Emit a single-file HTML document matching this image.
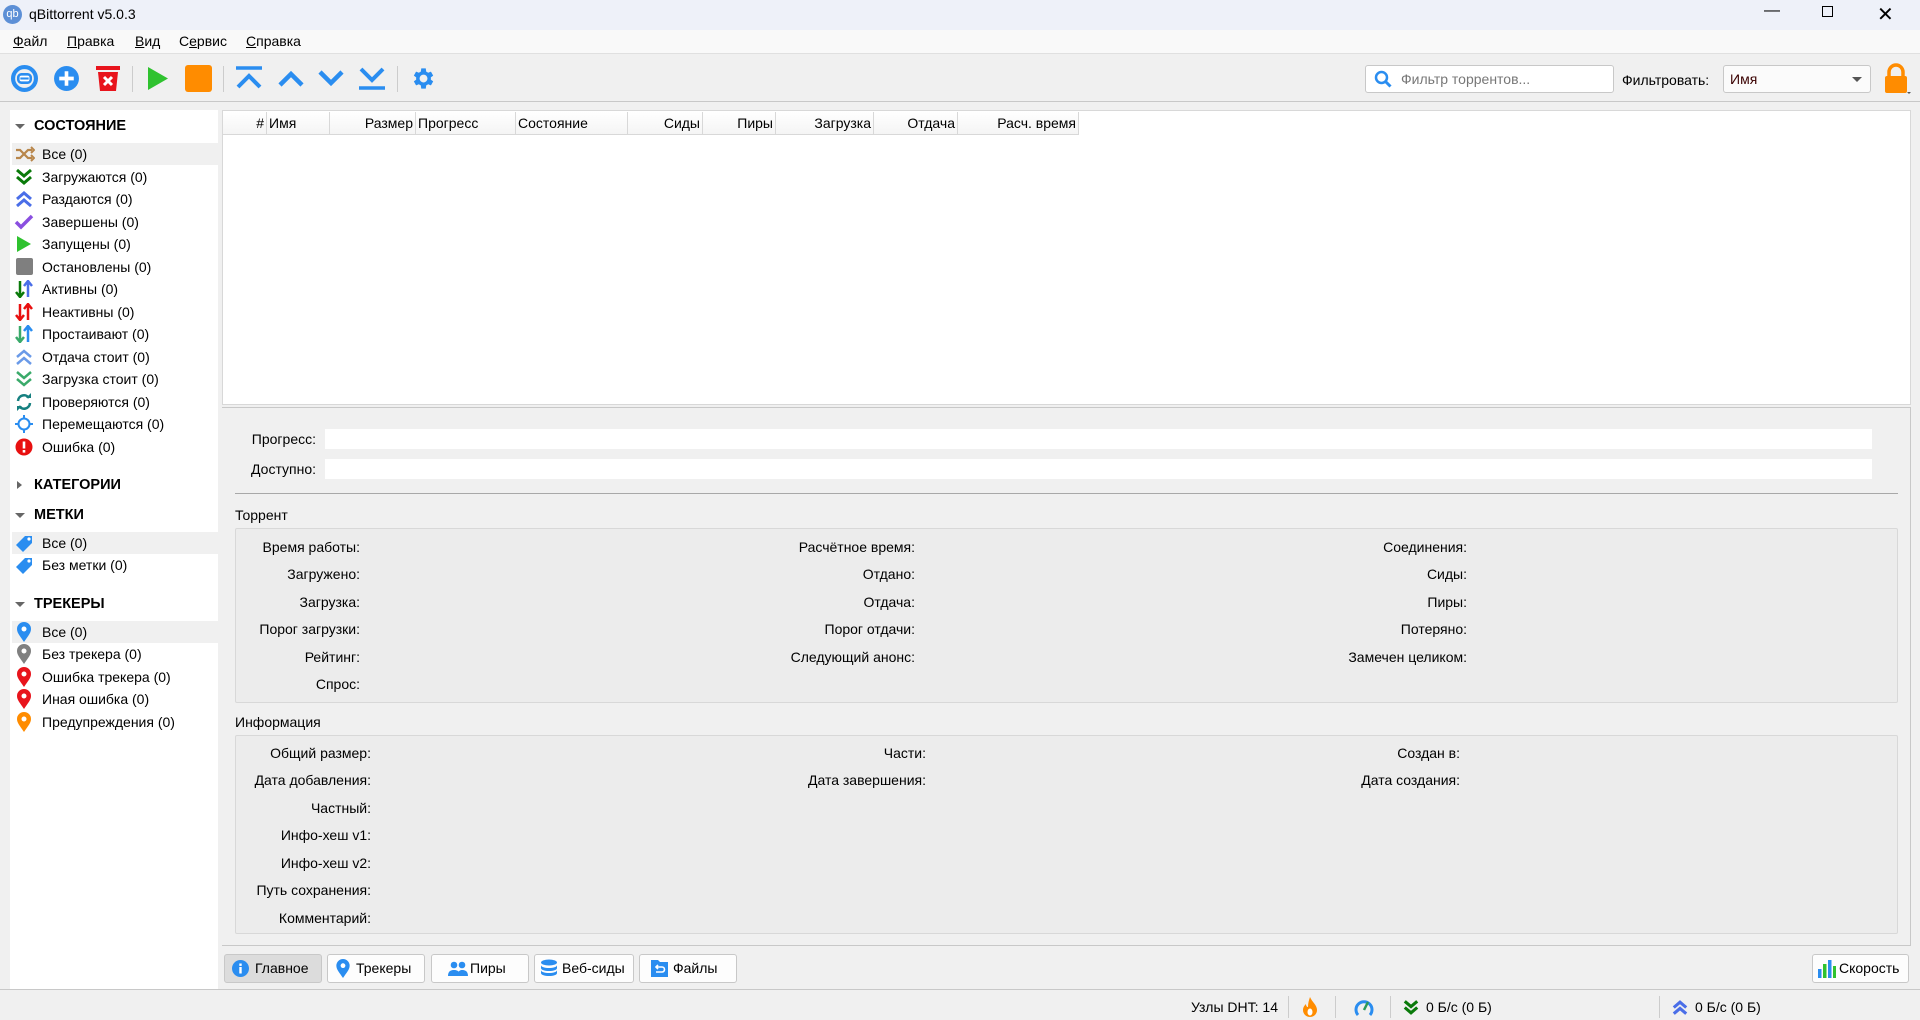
<!DOCTYPE html>
<html><head><meta charset="utf-8"><style>
*{margin:0;padding:0;box-sizing:border-box}
body{width:1920px;height:1020px;background:#f0f0f0;font-family:"Liberation Sans","DejaVu Sans",sans-serif;font-size:14px;color:#000;position:relative;overflow:hidden}
.a{position:absolute;white-space:nowrap}
.r{position:absolute;white-space:nowrap;text-align:right}
svg{position:absolute}
.side div.it{position:absolute;left:12px;width:206px;height:22px;line-height:22px;padding-left:30px;font-size:14px}
.side div.hl{background:#f0f0f0}
.hd{position:absolute;font-weight:bold;font-size:14.5px;left:34px}
.tri{position:absolute;left:15px;width:0;height:0}
.col{position:absolute;top:112px;height:23px;line-height:23px;border-right:1px solid #d8d8d8;font-size:14px;padding:0 2px;background:linear-gradient(#fff,#f4f4f4)}
.btn{position:absolute;top:954px;height:29px;border:1px solid #c8c8c8;border-radius:3px;background:#fdfdfd;font-size:14px;line-height:27px}
</style></head><body>
<!-- title bar -->
<div class="a" style="left:0;top:0;width:1920px;height:30px;background:#eef1f9"></div>
<div class="a" style="left:3px;top:5px;width:19px;height:19px;border-radius:50%;background:#5c8fd6;color:#fff;font-size:11px;line-height:19px;text-align:center">qb</div>
<div class="a" style="left:29px;top:6px;font-size:14px">qBittorrent v5.0.3</div>
<div class="a" style="left:1764px;top:2px;font-size:16px">&#8212;</div>
<div class="a" style="left:1822px;top:6px;width:11px;height:11px;border:1px solid #000"></div>
<div class="a" style="left:1877px;top:2px;font-size:20px">&#x2715;</div>
<!-- menu -->
<div class="a" style="left:0;top:30px;width:1920px;height:24px;background:#f9f9f9;border-bottom:1px solid #e0e0e0"></div>
<div class="a" style="left:13px;top:33px"><u>Ф</u>айл</div>
<div class="a" style="left:67px;top:33px"><u>П</u>равка</div>
<div class="a" style="left:135px;top:33px"><u>В</u>ид</div>
<div class="a" style="left:179px;top:33px">С<u>е</u>рвис</div>
<div class="a" style="left:246px;top:33px"><u>С</u>правка</div>
<div class="a" style="left:0;top:101px;width:1920px;height:1px;background:#c8c8c8"></div>
<!-- toolbar icons -->
<svg style="left:11px;top:65px" width="27" height="27" viewBox="0 0 26 26"><circle cx="13" cy="13" r="11" fill="none" stroke="#2a8df0" stroke-width="4"/><rect x="7" y="9" width="12" height="8" rx="3" fill="#fff" stroke="#2a8df0" stroke-width="2.5"/><rect x="9" y="12" width="8" height="2" fill="#2a8df0"/></svg>
<svg style="left:53px;top:65px" width="27" height="27" viewBox="0 0 26 26"><circle cx="13" cy="13" r="12" fill="#2a8df0"/><path d="M13 6v14M6 13h14" stroke="#fff" stroke-width="3.5"/></svg>
<svg style="left:95px;top:65px" width="26" height="27" viewBox="0 0 26 27"><rect x="1" y="1" width="24" height="4" fill="#e8141c"/><path d="M3 7h20l-2 19H5z" fill="#e8141c"/><path d="M9 12l8 8M17 12l-8 8" stroke="#fff" stroke-width="3"/></svg>
<div class="a" style="left:132px;top:66px;width:1px;height:26px;background:#ccc"></div>
<svg style="left:145px;top:65px" width="26" height="27" viewBox="0 0 26 27"><path d="M3 2l20 11.5L3 25z" fill="#2fc22f"/></svg>
<svg style="left:185px;top:65px" width="27" height="27"><rect x="0" y="0" width="27" height="27" rx="3" fill="#ff8c00"/></svg>
<div class="a" style="left:223px;top:66px;width:1px;height:26px;background:#ccc"></div>
<svg style="left:235px;top:66px" width="28" height="24" viewBox="0 0 28 24"><path d="M1 2h26" stroke="#2a8df0" stroke-width="3.5"/><path d="M3 21l11-11 11 11" fill="none" stroke="#2a8df0" stroke-width="4"/></svg>
<svg style="left:277px;top:66px" width="28" height="24" viewBox="0 0 28 24"><path d="M3 19l11-11 11 11" fill="none" stroke="#2a8df0" stroke-width="4.5"/></svg>
<svg style="left:317px;top:66px" width="28" height="24" viewBox="0 0 28 24"><path d="M3 6l11 11 11-11" fill="none" stroke="#2a8df0" stroke-width="4.5"/></svg>
<svg style="left:358px;top:66px" width="28" height="24" viewBox="0 0 28 24"><path d="M3 3l11 11 11-11" fill="none" stroke="#2a8df0" stroke-width="4"/><path d="M1 22h26" stroke="#2a8df0" stroke-width="3.5"/></svg>
<div class="a" style="left:397px;top:66px;width:1px;height:26px;background:#ccc"></div>
<svg style="left:409px;top:65px" width="27" height="27" viewBox="0 0 24 24"><path fill="#2a8df0" d="M19.4 13a7.5 7.5 0 000-2l2.1-1.6-2-3.5-2.5 1a7.6 7.6 0 00-1.7-1L14.9 3h-4l-.4 2.9a7.6 7.6 0 00-1.7 1l-2.5-1-2 3.5L6.4 11a7.5 7.5 0 000 2l-2.1 1.6 2 3.5 2.5-1c.5.4 1.1.7 1.7 1l.4 2.9h4l.4-2.9c.6-.3 1.2-.6 1.7-1l2.5 1 2-3.5zM12.9 15.5a3.5 3.5 0 110-7 3.5 3.5 0 010 7z"/></svg>
<!-- search -->
<div class="a" style="left:1365px;top:65px;width:249px;height:28px;background:#fff;border:1px solid #c8c8c8;border-radius:3px"></div>
<svg style="left:1374px;top:70px" width="18" height="18" viewBox="0 0 18 18"><circle cx="7.5" cy="7.5" r="5.5" fill="none" stroke="#2a8df0" stroke-width="2.5"/><path d="M11.5 11.5l5 5" stroke="#2a8df0" stroke-width="3"/></svg>
<div class="a" style="left:1401px;top:71px;color:#777">Фильтр торрентов...</div>
<div class="a" style="left:1622px;top:72px">Фильтровать:</div>
<div class="a" style="left:1723px;top:65px;width:148px;height:28px;background:#fbfbfb;border:1px solid #c8c8c8;border-radius:3px"></div>
<div class="a" style="left:1730px;top:71px;color:#3a0000">Имя</div>
<div class="a" style="left:1852px;top:77px;border-left:5px solid transparent;border-right:5px solid transparent;border-top:5px solid #555"></div>
<svg style="left:1883px;top:63px" width="28" height="32" viewBox="0 0 28 32"><path d="M6 14V9a7 7 0 0114 0v5" fill="none" stroke="#ff8c00" stroke-width="3.5"/><rect x="2" y="13" width="22" height="17" rx="2" fill="#ff8c00"/><path d="M24 29l2 2 2-2z" fill="#555"/></svg>
<!-- sidebar -->
<div class="a side" style="left:10px;top:110px;width:208px;height:880px;background:#fff">
</div>
<div class="side">
<div class="tri" style="top:124px;border-left:5px solid transparent;border-right:5px solid transparent;border-top:5px solid #666"></div>
<div class="hd" style="top:118px">СОСТОЯНИЕ</div>
<div class="it hl" style="top:143px">Все (0)</div>
<div class="it" style="top:166px">Загружаются (0)</div>
<div class="it" style="top:188px">Раздаются (0)</div>
<div class="it" style="top:211px">Завершены (0)</div>
<div class="it" style="top:233px">Запущены (0)</div>
<div class="it" style="top:256px">Остановлены (0)</div>
<div class="it" style="top:278px">Активны (0)</div>
<div class="it" style="top:301px">Неактивны (0)</div>
<div class="it" style="top:323px">Простаивают (0)</div>
<div class="it" style="top:346px">Отдача стоит (0)</div>
<div class="it" style="top:368px">Загрузка стоит (0)</div>
<div class="it" style="top:391px">Проверяются (0)</div>
<div class="it" style="top:413px">Перемещаются (0)</div>
<div class="it" style="top:436px">Ошибка (0)</div>
<div class="tri" style="top:481px;left:17px;border-top:4px solid transparent;border-bottom:4px solid transparent;border-left:5px solid #666"></div>
<div class="hd" style="top:477px">КАТЕГОРИИ</div>
<div class="tri" style="top:513px;border-left:5px solid transparent;border-right:5px solid transparent;border-top:5px solid #666"></div>
<div class="hd" style="top:507px">МЕТКИ</div>
<div class="it hl" style="top:532px">Все (0)</div>
<div class="it" style="top:554px">Без метки (0)</div>
<div class="tri" style="top:602px;border-left:5px solid transparent;border-right:5px solid transparent;border-top:5px solid #666"></div>
<div class="hd" style="top:596px">ТРЕКЕРЫ</div>
<div class="it hl" style="top:621px">Все (0)</div>
<div class="it" style="top:643px">Без трекера (0)</div>
<div class="it" style="top:666px">Ошибка трекера (0)</div>
<div class="it" style="top:688px">Иная ошибка (0)</div>
<div class="it" style="top:711px">Предупреждения (0)</div>
</div>
<!-- sidebar icons -->
<svg style="left:15px;top:146px" width="20" height="16" viewBox="0 0 20 16"><path d="M1 4h4l8 8h4M1 12h4l8-8h4" fill="none" stroke="#b8864b" stroke-width="2.2"/><path d="M16 1l3 3-3 3M16 9l3 3-3 3" fill="none" stroke="#b8864b" stroke-width="2"/></svg>
<svg style="left:15px;top:168px" width="18" height="18" viewBox="0 0 18 18"><path d="M2 2l7 6 7-6M2 9l7 6 7-6" fill="none" stroke="#0a7a0a" stroke-width="3"/></svg>
<svg style="left:15px;top:190px" width="18" height="18" viewBox="0 0 18 18"><path d="M2 9l7-6 7 6M2 16l7-6 7 6" fill="none" stroke="#4a6ee8" stroke-width="3"/></svg>
<svg style="left:14px;top:213px" width="20" height="18" viewBox="0 0 20 18"><path d="M2 9l5 5 11-11" fill="none" stroke="#8a4fe0" stroke-width="3.5"/></svg>
<svg style="left:16px;top:235px" width="16" height="18" viewBox="0 0 16 18"><path d="M1 1l14 8-14 8z" fill="#2fc22f"/></svg>
<svg style="left:16px;top:258px" width="17" height="17"><rect width="17" height="17" rx="2" fill="#7f7f7f"/></svg>
<svg style="left:15px;top:280px" width="18" height="18" viewBox="0 0 18 18"><path d="M5 1v15M1 12l4 5 4-5" fill="none" stroke="#0a7a0a" stroke-width="2.5"/><path d="M13 17V2M9 6l4-5 4 5" fill="none" stroke="#4a6ee8" stroke-width="2.5"/></svg>
<svg style="left:15px;top:303px" width="18" height="18" viewBox="0 0 18 18"><path d="M5 1v15M1 12l4 5 4-5" fill="none" stroke="#e81010" stroke-width="2.5"/><path d="M13 17V2M9 6l4-5 4 5" fill="none" stroke="#e81010" stroke-width="2.5"/></svg>
<svg style="left:15px;top:325px" width="18" height="18" viewBox="0 0 18 18"><path d="M5 1v15M1 12l4 5 4-5" fill="none" stroke="#3aaa6a" stroke-width="2.5"/><path d="M13 17V2M9 6l4-5 4 5" fill="none" stroke="#2a8df0" stroke-width="2.5"/></svg>
<svg style="left:15px;top:348px" width="18" height="18" viewBox="0 0 18 18"><path d="M2 9l7-6 7 6M2 16l7-6 7 6" fill="none" stroke="#6a9ae8" stroke-width="2.5"/></svg>
<svg style="left:15px;top:370px" width="18" height="18" viewBox="0 0 18 18"><path d="M2 2l7 6 7-6M2 9l7 6 7-6" fill="none" stroke="#3aaa6a" stroke-width="2.5"/></svg>
<svg style="left:15px;top:393px" width="18" height="18" viewBox="0 0 18 18"><path d="M3 8a6 6 0 0111-3M15 10a6 6 0 01-11 3" fill="none" stroke="#168080" stroke-width="2.5"/><path d="M11 5h5V0zM7 13H2v5z" fill="#168080"/></svg>
<svg style="left:15px;top:415px" width="18" height="18" viewBox="0 0 18 18"><circle cx="9" cy="9" r="5.5" fill="none" stroke="#2a8df0" stroke-width="2"/><path d="M9 0v4M9 14v4M0 9h4M14 9h4" stroke="#2a8df0" stroke-width="2"/></svg>
<svg style="left:15px;top:438px" width="18" height="18"><circle cx="9" cy="9" r="8.5" fill="#e81010"/><rect x="7.7" y="3.5" width="2.6" height="7" fill="#fff"/><rect x="7.7" y="12" width="2.6" height="2.6" fill="#fff"/></svg>
<svg style="left:15px;top:534px" width="19" height="19" viewBox="0 0 19 19"><path d="M1 11L10 2h7v7l-9 9z" fill="#2a8df0"/><circle cx="14" cy="5" r="1.6" fill="#fff"/></svg>
<svg style="left:15px;top:556px" width="19" height="19" viewBox="0 0 19 19"><path d="M1 11L10 2h7v7l-9 9z" fill="#2a8df0"/><circle cx="14" cy="5" r="1.6" fill="#fff"/></svg>
<svg style="left:17px;top:622px" width="14" height="20" viewBox="0 0 14 20"><path d="M7 20C3 14 0 11 0 7a7 7 0 0114 0c0 4-3 7-7 13z" fill="#2a8df0"/><circle cx="7" cy="7" r="2.5" fill="#fff"/></svg>
<svg style="left:17px;top:644px" width="14" height="20" viewBox="0 0 14 20"><path d="M7 20C3 14 0 11 0 7a7 7 0 0114 0c0 4-3 7-7 13z" fill="#808080"/><circle cx="7" cy="7" r="2.5" fill="#fff"/></svg>
<svg style="left:17px;top:667px" width="14" height="20" viewBox="0 0 14 20"><path d="M7 20C3 14 0 11 0 7a7 7 0 0114 0c0 4-3 7-7 13z" fill="#e8141c"/><circle cx="7" cy="7" r="2.5" fill="#fff"/></svg>
<svg style="left:17px;top:689px" width="14" height="20" viewBox="0 0 14 20"><path d="M7 20C3 14 0 11 0 7a7 7 0 0114 0c0 4-3 7-7 13z" fill="#e8141c"/><circle cx="7" cy="7" r="2.5" fill="#fff"/></svg>
<svg style="left:17px;top:712px" width="14" height="20" viewBox="0 0 14 20"><path d="M7 20C3 14 0 11 0 7a7 7 0 0114 0c0 4-3 7-7 13z" fill="#ff8c00"/><circle cx="7" cy="7" r="2.5" fill="#fff"/></svg>
<!-- torrent list -->
<div class="a" style="left:222px;top:110px;width:1689px;height:295px;background:#fff;border:1px solid #d8d8d8"></div>
<div class="col" style="left:223px;width:44px;text-align:right">#</div>
<div class="col" style="left:267px;width:63px">Имя</div>
<div class="col" style="left:330px;width:86px;text-align:right">Размер</div>
<div class="col" style="left:416px;width:100px">Прогресс</div>
<div class="col" style="left:516px;width:112px">Состояние</div>
<div class="col" style="left:628px;width:75px;text-align:right">Сиды</div>
<div class="col" style="left:703px;width:73px;text-align:right">Пиры</div>
<div class="col" style="left:776px;width:98px;text-align:right">Загрузка</div>
<div class="col" style="left:874px;width:84px;text-align:right">Отдача</div>
<div class="col" style="left:958px;width:121px;text-align:right">Расч. время</div>
<div class="a" style="left:222px;top:134px;width:857px;height:1px;background:#d8d8d8"></div>
<div class="a" style="left:222px;top:407px;width:1689px;height:1px;background:#c8c8c8"></div>
<!-- details -->
<div class="r" style="left:230px;width:86px;top:431px">Прогресс:</div>
<div class="a" style="left:325px;top:429px;width:1547px;height:20px;background:#fff"></div>
<div class="r" style="left:230px;width:86px;top:461px">Доступно:</div>
<div class="a" style="left:325px;top:459px;width:1547px;height:20px;background:#fff"></div>
<div class="a" style="left:235px;top:493px;width:1663px;height:1px;background:#a8a8a8"></div>
<div class="a" style="left:235px;top:507px">Торрент</div>
<div class="a" style="left:235px;top:528px;width:1663px;height:175px;background:#ececec;border:1px solid #d8d8d8;border-radius:2px"></div>
<div class="r" style="left:160px;width:200px;top:539px">Время работы:</div>
<div class="r" style="left:160px;width:200px;top:566px">Загружено:</div>
<div class="r" style="left:160px;width:200px;top:594px">Загрузка:</div>
<div class="r" style="left:160px;width:200px;top:621px">Порог загрузки:</div>
<div class="r" style="left:160px;width:200px;top:649px">Рейтинг:</div>
<div class="r" style="left:160px;width:200px;top:676px">Спрос:</div>
<div class="r" style="left:715px;width:200px;top:539px">Расчётное время:</div>
<div class="r" style="left:715px;width:200px;top:566px">Отдано:</div>
<div class="r" style="left:715px;width:200px;top:594px">Отдача:</div>
<div class="r" style="left:715px;width:200px;top:621px">Порог отдачи:</div>
<div class="r" style="left:715px;width:200px;top:649px">Следующий анонс:</div>
<div class="r" style="left:1267px;width:200px;top:539px">Соединения:</div>
<div class="r" style="left:1267px;width:200px;top:566px">Сиды:</div>
<div class="r" style="left:1267px;width:200px;top:594px">Пиры:</div>
<div class="r" style="left:1267px;width:200px;top:621px">Потеряно:</div>
<div class="r" style="left:1267px;width:200px;top:649px">Замечен целиком:</div>
<div class="a" style="left:235px;top:714px">Информация</div>
<div class="a" style="left:235px;top:735px;width:1663px;height:199px;background:#ececec;border:1px solid #d8d8d8;border-radius:2px"></div>
<div class="r" style="left:171px;width:200px;top:745px">Общий размер:</div>
<div class="r" style="left:171px;width:200px;top:772px">Дата добавления:</div>
<div class="r" style="left:171px;width:200px;top:800px">Частный:</div>
<div class="r" style="left:171px;width:200px;top:827px">Инфо-хеш v1:</div>
<div class="r" style="left:171px;width:200px;top:855px">Инфо-хеш v2:</div>
<div class="r" style="left:171px;width:200px;top:882px">Путь сохранения:</div>
<div class="r" style="left:171px;width:200px;top:910px">Комментарий:</div>
<div class="r" style="left:726px;width:200px;top:745px">Части:</div>
<div class="r" style="left:726px;width:200px;top:772px">Дата завершения:</div>
<div class="r" style="left:1260px;width:200px;top:745px">Создан в:</div>
<div class="r" style="left:1260px;width:200px;top:772px">Дата создания:</div>
<div class="a" style="left:222px;top:945px;width:1689px;height:1px;background:#c8c8c8"></div>
<div class="a" style="left:1910px;top:408px;width:1px;height:538px;background:#c8c8c8"></div>
<!-- tab buttons -->
<div class="btn" style="left:224px;width:98px;background:#dcdcdc;padding-left:30px">Главное</div>
<svg style="left:232px;top:960px" width="17" height="17"><circle cx="8.5" cy="8.5" r="8.5" fill="#2a8df0"/><rect x="7.3" y="7" width="2.4" height="6.5" fill="#fff"/><rect x="7.3" y="3.5" width="2.4" height="2.4" fill="#fff"/></svg>
<div class="btn" style="left:327px;width:98px;padding-left:28px">Трекеры</div>
<svg style="left:336px;top:959px" width="14" height="19" viewBox="0 0 14 20"><path d="M7 20C3 14 0 11 0 7a7 7 0 0114 0c0 4-3 7-7 13z" fill="#2a8df0"/><circle cx="7" cy="7" r="2.5" fill="#fff"/></svg>
<div class="btn" style="left:431px;width:98px;padding-left:38px">Пиры</div>
<svg style="left:448px;top:961px" width="20" height="15" viewBox="0 0 20 15"><circle cx="6" cy="4" r="3.3" fill="#2a8df0"/><circle cx="14" cy="4" r="3.3" fill="#2a8df0"/><path d="M0 15c0-5 3-6 6-6s6 1 6 6zM9 15c1-5 3-6 5-6 3 0 6 1 6 6z" fill="#2a8df0"/></svg>
<div class="btn" style="left:534px;width:100px;padding-left:27px">Веб-сиды</div>
<svg style="left:540px;top:959px" width="18" height="19" viewBox="0 0 18 19"><ellipse cx="9" cy="3.5" rx="8" ry="3" fill="#2a8df0"/><path d="M1 6c0 4 16 4 16 0v3c0 4-16 4-16 0zM1 11c0 4 16 4 16 0v3c0 4-16 4-16 0z" fill="#2a8df0"/></svg>
<div class="btn" style="left:639px;width:98px;padding-left:33px">Файлы</div>
<svg style="left:651px;top:959px" width="17" height="18" viewBox="0 0 17 18"><path d="M0 1h7l2 2h8v15H0z" fill="#2a8df0"/><path d="M5 13h6a2.5 2.5 0 000-5H6M7 6L5 8l2 2" fill="none" stroke="#fff" stroke-width="1.6"/></svg>
<div class="btn" style="left:1812px;width:97px;padding-left:26px">Скорость</div>
<svg style="left:1818px;top:960px" width="18" height="18"><rect x="0" y="9" width="3.5" height="9" fill="#2a8df0"/><rect x="5" y="4" width="3.5" height="14" fill="#2fc22f"/><rect x="10" y="0" width="3.5" height="18" fill="#2a8df0"/><rect x="15" y="6" width="3" height="12" fill="#2fc22f"/></svg>
<div class="a" style="left:0;top:989px;width:1920px;height:1px;background:#c8c8c8"></div>
<!-- status bar -->
<div class="r" style="left:1100px;width:178px;top:999px">Узлы DHT: 14</div>
<div class="a" style="left:1288px;top:996px;width:1px;height:22px;background:#ccc"></div>
<svg style="left:1303px;top:997px" width="14" height="20" viewBox="0 0 14 20"><path d="M7 0C9 5 14 8 14 13a7 7 0 01-14 0c0-3 2-5 3-6 0 2 1 3 2 3C5 6 6 3 7 0z" fill="#ff8c00"/><ellipse cx="7" cy="15" rx="2.5" ry="3.5" fill="#fff"/></svg>
<div class="a" style="left:1335px;top:996px;width:1px;height:22px;background:#ccc"></div>
<svg style="left:1354px;top:998px" width="20" height="18" viewBox="0 0 20 18"><path d="M4 17A8 8 0 1116 17" fill="none" stroke="#2a8df0" stroke-width="3"/><path d="M10 12l4-8" stroke="#2a9a5a" stroke-width="2.5"/></svg>
<div class="a" style="left:1390px;top:996px;width:1px;height:22px;background:#ccc"></div>
<svg style="left:1403px;top:999px" width="16" height="17" viewBox="0 0 18 18"><path d="M2 2l7 6 7-6M2 9l7 6 7-6" fill="none" stroke="#0a7a0a" stroke-width="3.5"/></svg>
<div class="a" style="left:1426px;top:999px">0 Б/с (0 Б)</div>
<div class="a" style="left:1659px;top:996px;width:1px;height:22px;background:#ccc"></div>
<svg style="left:1672px;top:999px" width="16" height="17" viewBox="0 0 18 18"><path d="M2 9l7-6 7 6M2 16l7-6 7 6" fill="none" stroke="#4a6ee8" stroke-width="3.5"/></svg>
<div class="a" style="left:1695px;top:999px">0 Б/с (0 Б)</div>
</body></html>
